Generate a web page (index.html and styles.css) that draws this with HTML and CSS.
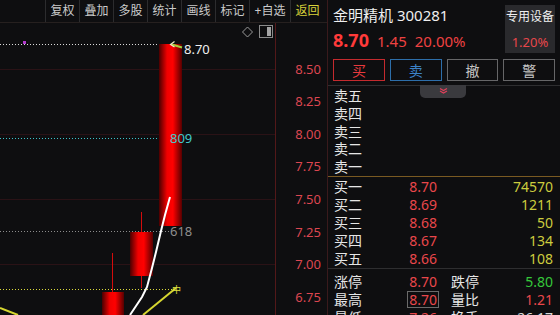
FILE: index.html
```html
<!DOCTYPE html>
<html lang="zh-CN">
<head>
    <meta charset="UTF-8">
    <meta name="viewport" content="width=device-width, initial-scale=1.0">
    <title>金明精机 300281</title>
    <link rel="stylesheet" href="styles.css">
</head>
<body>
    <div class="app">
        <section class="chart-pane">
            <div class="toolbar">
                <button class="tool-btn">复权</button>
                <button class="tool-btn">叠加</button>
                <button class="tool-btn">多股</button>
                <button class="tool-btn">统计</button>
                <button class="tool-btn">画线</button>
                <button class="tool-btn">标记</button>
                <button class="tool-btn">+自选</button>
                <button class="tool-btn back">返回</button>
            </div>

            <div class="chart-body">
                <div class="plot">
                    <svg class="plot-svg" width="275" height="292" viewBox="0 23 275 292">
                        <defs>
                            <linearGradient id="candle" x1="0" x2="1" y1="0" y2="0">
                                <stop offset="0" stop-color="#4a0000"/>
                                <stop offset="0.35" stop-color="#f00000"/>
                                <stop offset="0.6" stop-color="#ff0000"/>
                                <stop offset="1" stop-color="#560000"/>
                            </linearGradient>
                        </defs>

                        <!-- grid -->
                        <g stroke="#2a1216" stroke-width="1">
                            <line x1="0" y1="69.5" x2="275" y2="69.5"/>
                            <line x1="0" y1="134.5" x2="275" y2="134.5"/>
                            <line x1="0" y1="199.5" x2="275" y2="199.5"/>
                            <line x1="0" y1="264.5" x2="275" y2="264.5"/>
                        </g>

                        <!-- golden section lines -->
                        <g stroke-width="1" stroke-dasharray="1 2">
                            <line x1="0" y1="44.5" x2="168" y2="44.5" stroke="#dcdcdc"/>
                            <line x1="0" y1="138.5" x2="170" y2="138.5" stroke="#3ec2c8"/>
                            <line x1="0" y1="231.5" x2="170" y2="231.5" stroke="#8c8c8c"/>
                            <line x1="0" y1="289.5" x2="172" y2="289.5" stroke="#dada3a"/>
                        </g>
                        <rect x="23" y="41" width="3" height="3" fill="#b33ccf"/>

                        <!-- candles -->
                        <g stroke="#d40c0c" stroke-width="1">
                            <line x1="141.5" y1="212" x2="141.5" y2="288"/>
                            <line x1="112.5" y1="253" x2="112.5" y2="292"/>
                        </g>
                        <rect x="159" y="44" width="23" height="182" fill="url(#candle)"/>
                        <rect x="130" y="232" width="23" height="44" fill="url(#candle)"/>
                        <rect x="102" y="292" width="22" height="26" fill="url(#candle)"/>

                        <!-- moving averages -->
                        <polyline points="170,197 165,215 161,231 156,252 152,268 147,287 142,297 136,306 130,315" fill="none" stroke="#ffffff" stroke-width="2"/>
                        <polyline points="176,288 143,315" fill="none" stroke="#d6d630" stroke-width="2"/>
                        <polyline points="0,308 18,315" fill="none" stroke="#d6d630" stroke-width="2"/>

                        <!-- marks and labels -->
                        <path d="M172,44.5 L182,47.5" stroke="#a6d23c" stroke-width="2"/>
                        <path d="M174.5,41.5 L170.5,44.5 L174.5,47" fill="none" stroke="#eeeec8" stroke-width="1.2"/>
                        <text class="lbl" x="184" y="53.5" fill="#f0f0f0">8.70</text>
                        <text class="lbl" x="170" y="143" fill="#44c8cc">809</text>
                        <text class="lbl" x="170" y="236" fill="#8e8e8e">618</text>
                        <text class="mark" x="176.5" y="292.5" fill="#e0e040">中</text>

                        <!-- tool icons -->
                        <polygon points="247.5,27 252.5,32 247.5,37 242.5,32" fill="none" stroke="#9a9a9a"/>
                        <rect x="259.5" y="25.5" width="13" height="12" fill="none" stroke="#8a8a8a"/>
                        <rect x="267" y="27" width="4" height="9" fill="#a4a4a4"/>
                    </svg>
                </div>

                <div class="axis">
                    <span>8.50</span>
                    <span>8.25</span>
                    <span>8.00</span>
                    <span>7.75</span>
                    <span>7.50</span>
                    <span>7.25</span>
                    <span>7.00</span>
                    <span>6.75</span>
                </div>
            </div>
        </section>

        <aside class="quote">
            <div class="quote-head">
                <div class="summary">
                    <div class="info">
                        <div class="title">金明精机 300281</div>
                        <div class="price-line">
                            <span class="last">8.70</span>
                            <span class="chg">1.45</span>
                            <span class="chg">20.00%</span>
                        </div>
                    </div>
                    <div class="sector">
                        <div class="sector-name">专用设备</div>
                        <div class="sector-chg">1.20%</div>
                    </div>
                </div>
                <div class="trade-btns">
                    <button class="trade-btn buy">买</button>
                    <button class="trade-btn sell">卖</button>
                    <button class="trade-btn">撤</button>
                    <button class="trade-btn">警</button>
                </div>
            </div>

            <div class="book book-sell">
                <div class="fold">
                    <svg width="9" height="6" viewBox="0 0 9 6">
                        <path d="M1,0.5 L4.5,2.5 L8,0.5 M1,3 L4.5,5 L8,3" fill="none" stroke="#e0405a" stroke-width="1.2"/>
                    </svg>
                </div>
                <div class="row"><span>卖五</span><span></span><span></span></div>
                <div class="row"><span>卖四</span><span></span><span></span></div>
                <div class="row"><span>卖三</span><span></span><span></span></div>
                <div class="row"><span>卖二</span><span></span><span></span></div>
                <div class="row"><span>卖一</span><span></span><span></span></div>
            </div>

            <div class="book book-buy">
                <div class="row"><span>买一</span><span class="up">8.70</span><span class="vol">74570</span></div>
                <div class="row"><span>买二</span><span class="up">8.69</span><span class="vol">1211</span></div>
                <div class="row"><span>买三</span><span class="up">8.68</span><span class="vol">50</span></div>
                <div class="row"><span>买四</span><span class="up">8.67</span><span class="vol">134</span></div>
                <div class="row"><span>买五</span><span class="up">8.66</span><span class="vol">108</span></div>
            </div>

            <div class="stats">
                <div class="stat-row"><span>涨停</span><span class="up">8.70</span><span class="k2">跌停</span><span class="down">5.80</span></div>
                <div class="stat-row"><span>最高</span><span class="up"><span class="boxed">8.70</span></span><span class="k2">量比</span><span class="up">1.21</span></div>
                <div class="stat-row"><span>最低</span><span class="up">7.26</span><span class="k2">换手</span><span class="plain">26.17</span></div>
            </div>
        </aside>
    </div>
</body>
</html>
```

FILE: styles.css
```css
* {
    margin: 0;
    padding: 0;
    box-sizing: border-box;
}

body {
    font-family: "Noto Sans", "Noto Sans CJK SC", sans-serif;
    background-color: #0e0e10;
    color: #e6e6e6;
    overflow: hidden;
}

.app {
    display: flex;
    width: 560px;
    height: 315px;
    overflow: hidden;
}

/* chart side */

.chart-pane {
    width: 328px;
    flex: none;
    border-right: 1px solid #3a1a1c;
    display: flex;
    flex-direction: column;
}

.toolbar {
    height: 23px;
    display: flex;
    justify-content: flex-end;
    padding-right: 3px;
    border-bottom: 1px solid #26201f;
}

.tool-btn {
    background: none;
    border: none;
    border-left: 1px solid #2c2c2e;
    color: #cacaca;
    font-family: "Noto Sans", "Noto Sans CJK SC", sans-serif;
    font-size: 12px;
    line-height: 22px;
    padding: 0 4.5px;
    cursor: pointer;
}

.tool-btn.back {
    color: #d8d23a;
}

.chart-body {
    display: flex;
    height: 292px;
}

.plot {
    width: 276px;
    flex: none;
    border-right: 1px solid #521819;
}

.plot-svg {
    display: block;
}

.plot-svg .lbl {
    font-family: "Noto Sans", sans-serif;
    font-size: 13px;
}

.plot-svg .mark {
    font-family: "Noto Sans CJK SC", sans-serif;
    font-size: 9px;
    text-anchor: middle;
}

.axis {
    flex: 1;
    display: flex;
    flex-direction: column;
    align-items: flex-end;
    padding-top: 29.7px;
    padding-right: 6px;
}

.axis span {
    height: 32.6px;
    line-height: 32.6px;
    font-size: 13px;
    color: #dc4650;
}

/* quote panel */

.quote {
    width: 232px;
    flex: none;
}

.quote-head {
    padding: 5px 5px 4px;
    border-bottom: 1px solid #2e2e30;
}

.summary {
    display: flex;
    justify-content: space-between;
    height: 48px;
}

.title {
    font-size: 15px;
    line-height: 20px;
    color: #efefef;
}

.price-line {
    display: flex;
    align-items: baseline;
    gap: 8px;
    margin-top: 4px;
    line-height: 22px;
}

.last {
    font-size: 18px;
    font-weight: 700;
    color: #ff3a3a;
}

.chg {
    font-size: 15px;
    color: #ee4242;
}

.sector {
    width: 50px;
    background-color: #2a2a2d;
    text-align: center;
    padding-top: 4px;
}

.sector-name {
    font-size: 12px;
    line-height: 16px;
    color: #f0f0f0;
}

.sector-chg {
    font-size: 13px;
    line-height: 16px;
    margin-top: 9px;
    color: #e8474b;
}

.trade-btns {
    display: grid;
    grid-template-columns: repeat(4, 1fr);
    gap: 5px;
    margin-top: 6px;
}

.trade-btn {
    height: 22px;
    background: none;
    border: 1px solid #666668;
    color: #c4c4c4;
    font-family: "Noto Sans CJK SC", sans-serif;
    font-size: 14px;
    line-height: 20px;
}

.trade-btn.buy {
    border-color: #c42a2e;
    color: #e83a3e;
}

.trade-btn.sell {
    border-color: #2d6eaa;
    color: #3c82c8;
}

.book {
    padding: 1px 7px 0 6px;
}

.book-sell {
    position: relative;
    border-bottom: 1px solid #7a5a22;
}

.book-sell .row {
    height: 17.8px;
    line-height: 17.8px;
}

.book-buy {
    border-bottom: 1px solid #2e2e30;
}

.fold {
    position: absolute;
    top: -1px;
    left: 92px;
    width: 46px;
    height: 13px;
    background-color: #3a3a3e;
    border-radius: 0 0 5px 5px;
    display: flex;
    justify-content: center;
    padding-top: 3px;
}

.fold svg {
    display: block;
}

.row {
    display: grid;
    grid-template-columns: 48px 55px 1fr;
    height: 18px;
    line-height: 18px;
    font-size: 14px;
}

.row span:nth-child(2),
.row span:nth-child(3) {
    text-align: right;
}

.up {
    color: #e9474b;
}

.down {
    color: #35c83a;
}

.vol {
    color: #cccc3e;
}

.plain {
    color: #d8d8d8;
}

.stats {
    padding: 4px 7px 0 6px;
}

.stat-row {
    display: grid;
    grid-template-columns: 48px 55px 62px 1fr;
    height: 18px;
    line-height: 18px;
    font-size: 14px;
}

.stat-row span:nth-child(2),
.stat-row span:nth-child(4) {
    text-align: right;
}

.stat-row .k2 {
    padding-left: 14px;
}

.boxed {
    display: inline-block;
    border: 1px solid #6a6a6a;
    padding: 0 1px;
    line-height: 15px;
    margin-right: -2px;
}
```
